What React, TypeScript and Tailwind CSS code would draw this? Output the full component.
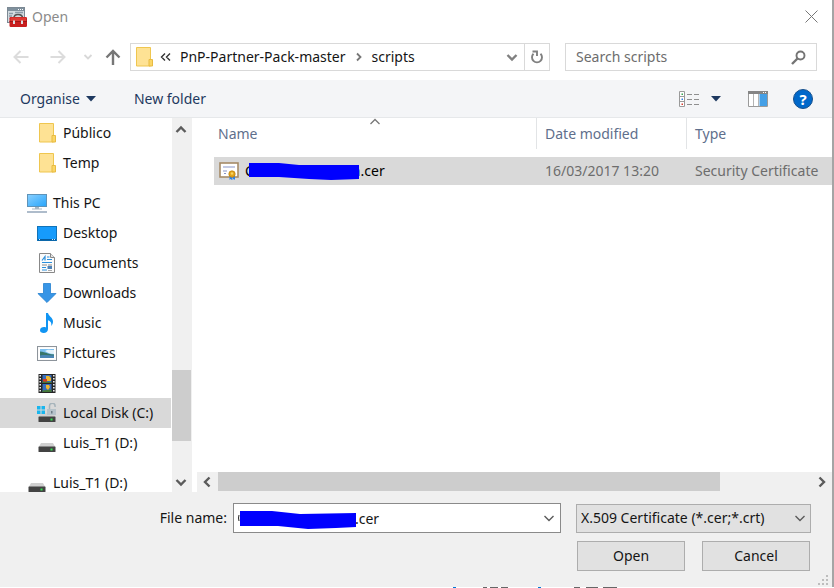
import type { ReactNode } from "react";

const FolderIcon = () => (
  <svg width="20" height="20" viewBox="0 0 20 20" className="block">
    <path d="M2.5 .5h14v18.5h-14z" fill="#fee294" stroke="#efc64f" />
    <path d="M15 12.5h3.5v6.5H15z" fill="#fbd666" stroke="#e8bb42" />
  </svg>
);

const PcIcon = () => (
  <svg width="20" height="20" viewBox="0 0 20 20" className="block">
    <defs>
      <linearGradient id="pc" x1="0" y1="0" x2="1" y2="1">
        <stop offset="0" stopColor="#8ad0ff" />
        <stop offset="1" stopColor="#27a5fb" />
      </linearGradient>
    </defs>
    <rect x=".5" y="1.5" width="19" height="12" fill="url(#pc)" stroke="#5f93b8" />
    <path d="M8 14h4v1.5h3v1H5v-1h3z" fill="#a9b8c4" />
    <path d="M0 18h20v2H0z" fill="#aebccb" />
  </svg>
);

const DesktopIcon = () => (
  <svg width="20" height="20" viewBox="0 0 20 20" className="block">
    <rect x=".5" y="3.5" width="19" height="14" fill="#169bfb" stroke="#1173b8" />
    <path d="M1 16h18v1.5H1z" fill="#075c9c" />
    <path d="M2 16h1v1H2zM15 16h1v1h-1zM17 16h1v1h-1z" fill="#cdeaff" />
  </svg>
);

const DocumentIcon = () => (
  <svg width="20" height="20" viewBox="0 0 20 20" className="block">
    <path d="M2.5.5h11l4 4v15h-15z" fill="#fbfbfb" stroke="#888" />
    <path d="M13.5.5v4h4" fill="#e4e4e4" stroke="#888" />
    <path d="M5 7.5 8 3.5v4M10 4h2.5M10 6.500h5M5 9.500h10M5 14.500h4M5 17h5" stroke="#2b8fdc" fill="none" strokeWidth="1.2" />
    <path d="M5 12h5M11 12h4" stroke="#888" />
    <path d="M10.500 13h4.500v3h-4.500z" fill="#4e83b8" />
    <path d="M11 17.500h4" stroke="#aaa" />
  </svg>
);

const DownloadIcon = () => (
  <svg width="20" height="20" viewBox="0 0 20 20" className="block">
    <path d="M6.5.5h7v10h5.500L10 19.500.900 10.500h5.600z" fill="#3795e6" stroke="#2580cf" strokeWidth=".8" />
  </svg>
);

const MusicIcon = () => (
  <svg width="20" height="20" viewBox="0 0 20 20" className="block">
    <path d="M9 0h2c.5 3 5 4.500 5 8.500 0 2-.6 3.200-1.800 4.500.8-3-.7-5-3.200-5.800V16c0 2.500-2 4-4.300 4C4.500 20 3 19 3 17.200 3 15 5 14 7 14c.8 0 1.400.1 2 .4z" fill="#1195f3" />
  </svg>
);

const PictureIcon = () => (
  <svg width="20" height="20" viewBox="0 0 20 20" className="block">
    <rect x=".5" y="3.5" width="19" height="14" fill="#fafafa" stroke="#8d949b" />
    <path d="M2 5h16v11H2z" fill="#fff" />
    <path d="M3 6h14v9H3z" fill="#7cc0f0" />
    <path d="M8 8c3-2 5-1 9-1v4c-4 0-6-1-9-3z" fill="#e4f3fc" />
    <path d="M3 8.500c3 0 5 1 8 2 2 .7 4 1 6 1V13H3z" fill="#38766a" />
    <path d="M3 12.500c5-1 9 0 14 0V15H3z" fill="#4a86b5" />
  </svg>
);

const VideoIcon = () => (
  <svg width="20" height="20" viewBox="0 0 20 20" className="block">
    <path d="M1.500 1h17v19h-17z" fill="#252525" />
    <path d="M3.200 2v17M16.800 2v17" stroke="#eee" strokeWidth="1.6" strokeDasharray="1.5 1.5" />
    <path d="M5.500 2h9v8h-9zM5.500 11h9v8h-9z" fill="#386fbd" />
    <path d="M9 3h3l2 2v3H9z" fill="#eeb830" />
    <path d="M6 6h4v3H6z" fill="#cf3c28" />
    <path d="M5.500 10V8.500l9 .5v1zM5.500 19v-1.500l9-1V19z" fill="#447838" />
    <path d="M9 12h3l1 2-2 3-2-2z" fill="#f0b72d" />
  </svg>
);

const DriveShape = () => (
  <>
    <path d="M4 10h12l2.500 4.500h-17z" fill="#d0d0d0" />
    <rect x="1.5" y="13.5" width="17" height="5.5" rx=".6" fill="#434343" />
    <path d="M13.500 15.500h2v2h-2z" fill="#37e052" />
  </>
);

const DriveIcon = () => (
  <svg width="20" height="20" viewBox="0 0 20 20" className="block">
    <DriveShape />
  </svg>
);

const SystemDriveIcon = () => (
  <svg width="20" height="20" viewBox="0 0 20 20" className="block">
    <DriveShape />
    <path d="M0 3h3.500v3.500H0zM4.500 3H8v3.500H4.500zM0 7.500h3.500V11H0zM4.500 7.500H8V11H4.500z" fill="#18b5ee" />
    <path d="M12.500 6V3a2.800 2.800 0 0 1 5.600 0v1" stroke="#a7b4bb" strokeWidth="1.5" fill="none" />
    <path d="M10 6h9v6h-9z" fill="#b6c3ca" />
    <path d="M14 8h1.500v2.500H14z" fill="#6d7d86" />
  </svg>
);

const CertificateIcon = () => (
  <svg width="20" height="20" viewBox="0 0 20 20" className="block">
    <rect x="1" y="2" width="18" height="14" fill="#fff" stroke="#a68b67" strokeWidth="1.6" />
    <path d="M4 6h12M4 10h4M5 12.500h2" stroke="#8795c8" />
    <path d="M10.500 14h2.500v5l-1.500-1-1 1zM13.500 14H16v5l-1.200-1-1.300 1z" fill="#2c82e8" />
    <circle cx="13" cy="13" r="3.2" fill="#e2a51c" stroke="#bb7c08" strokeWidth=".7" />
    <circle cx="13" cy="12.5" r="1.2" fill="#f7d363" />
  </svg>
);

const ToolboxIcon = () => (
  <svg width="20" height="20" viewBox="0 0 20 20" className="block">
    <rect x=".5" y=".5" width="17" height="15" fill="#d3dbe0" stroke="#7c8994" />
    <path d="M1 1h16v3H1z" fill="#7f909d" />
    <path d="M11 2.500h1M13 2.500h1M15 2.500h1" stroke="#fff" />
    <path d="M2 6.500h4M2 9h3M8 5.500h8" stroke="#8b9ba8" strokeWidth="1.5" />
    <path d="M7 11c0-3 1.500-3.500 4-3.500s4.500.5 4.500 3.500" stroke="#555" strokeWidth="1.6" fill="none" />
    <rect x="2.5" y="10" width="17.5" height="10" rx="1.2" fill="#c81e1e" />
    <path d="M3.500 10.500h15.500v3.500H3.500z" fill="#de3a34" />
    <path d="M2.500 14.500h17.500" stroke="#a01616" />
    <path d="M6 13.500h2V17H6zM14 13.500h2V17h-2z" fill="#d9dde0" />
  </svg>
);

type ChevronProps = { d: string; color?: string; weight?: number };

const Chevron = ({ d, color = "#5b5b5b", weight = 2.4 }: ChevronProps) => (
  <svg width="12" height="12" viewBox="0 0 12 12" fill="none" className="block shrink-0">
    <path d={d} stroke={color} strokeWidth={weight} />
  </svg>
);

const DOWN = "M1.500 4 6 8.500 10.500 4";
const UP = "M1.500 8 6 3.500 10.500 8";
const LEFT = "M8.500 1.500 4 6l4.500 4.500";
const RIGHT = "M3.500 1.500 8 6l-4.500 4.500";

const Caret = () => (
  <svg width="10" height="6" viewBox="0 0 10 6" className="block">
    <path d="M0 0h10L5 5.500z" fill="#1e3960" />
  </svg>
);

type NavItem = { label: string; icon: ReactNode; top?: boolean; selected?: boolean };

const groups: NavItem[][] = [
  [
    { label: "Público", icon: <FolderIcon /> },
    { label: "Temp", icon: <FolderIcon /> },
  ],
  [
    { label: "This PC", icon: <PcIcon />, top: true },
    { label: "Desktop", icon: <DesktopIcon /> },
    { label: "Documents", icon: <DocumentIcon /> },
    { label: "Downloads", icon: <DownloadIcon /> },
    { label: "Music", icon: <MusicIcon /> },
    { label: "Pictures", icon: <PictureIcon /> },
    { label: "Videos", icon: <VideoIcon /> },
    { label: "Local Disk (C:)", icon: <SystemDriveIcon />, selected: true },
    { label: "Luis_T1 (D:)", icon: <DriveIcon /> },
  ],
  [{ label: "Luis_T1 (D:)", icon: <DriveIcon />, top: true }],
];

function Navigation() {
  return (
    <nav className="flex w-[171px] shrink-0 flex-col gap-[10px] overflow-hidden">
      {groups.map((group, i) => (
        <ul key={i}>
          {group.map((item) => (
            <li key={item.label}>
              <button
                type="button"
                className={`flex h-[30px] w-full items-center gap-[6px] whitespace-nowrap text-left ${item.top ? "pl-[27px]" : "pl-[37px]"} ${item.selected ? "bg-[#d9d9d9]" : ""}`}
              >
                {item.icon}
                {item.label}
              </button>
            </li>
          ))}
        </ul>
      ))}
    </nav>
  );
}

function FileList() {
  return (
    <table className="ml-[19px] w-[calc(100%-19px)] table-fixed border-collapse whitespace-nowrap text-left">
      <thead className="text-[#5f6f8c]">
        <tr className="align-top">
          <th className="w-[323px] p-0 pb-2 font-normal">
            <div className="relative flex h-[31px] items-center border-r border-[#e2e4e6] pl-1">
              Name
              <span className="absolute left-1/2 top-[-2px] -translate-x-1/2">
                <Chevron d={UP} color="#777" weight={1.3} />
              </span>
            </div>
          </th>
          <th className="w-[150px] p-0 pb-2 font-normal">
            <div className="flex h-[31px] items-center border-r border-[#e2e4e6] pl-2">Date modified</div>
          </th>
          <th className="p-0 pb-2 font-normal">
            <div className="flex h-[31px] items-center pl-2">Type</div>
          </th>
        </tr>
      </thead>
      <tbody>
        <tr className="h-[28px] bg-[#d9d9d9] text-[#6d6d6d]">
          <td className="p-0 text-black">
            <div className="flex items-center pl-[5px]">
              <CertificateIcon />
              <span className="ml-[6px]">C</span>
              <svg width="110" height="20" viewBox="0 0 110 20" className="z-10 -ml-[5px] -mr-[7px] block">
                <path d="M0 2 30 2 50 4 110 4V18L82 19 60 18 30 16H0z" fill="#00f" />
              </svg>
              <span>n.cer</span>
            </div>
          </td>
          <td className="p-0 pl-2">16/03/2017 13:20</td>
          <td className="p-0 pl-2">Security Certificate</td>
        </tr>
      </tbody>
    </table>
  );
}

export default function App() {
  return (
    <div className="flex h-screen flex-col overflow-hidden bg-white font-['Noto_Sans','Open_Sans',sans-serif] text-[14px] leading-5 text-[#151515]">
      <div className="flex min-h-0 flex-1 flex-col border-r-2 border-[#a5a5a5]">
        <header className="flex h-[33px] shrink-0 items-center gap-[5px] pl-[7px] pr-[14px]">
          <ToolboxIcon />
          <h1 className="text-[#8b8b8b]">Open</h1>
          <button type="button" aria-label="Close" className="ml-auto">
            <svg width="13" height="13" viewBox="0 0 13 13" className="block">
              <path d="M.5.5l12 12M12.500.5l-12 12" stroke="#777" />
            </svg>
          </button>
        </header>

        <div className="flex h-[47px] shrink-0 items-center pb-[1px] pl-[13px] pr-[15px] pt-[2px]">
          <div className="flex w-[117px] shrink-0 items-center">
            <button type="button" aria-label="Back" className="mr-[21px]">
              <svg width="16" height="14" viewBox="0 0 16 14" fill="none" stroke="#dcdcdc" strokeWidth="2" className="block">
                <path d="M15.500 7H1.500M7.500 1l-6 6 6 6" />
              </svg>
            </button>
            <button type="button" aria-label="Forward" className="mr-[17px]">
              <svg width="16" height="14" viewBox="0 0 16 14" fill="none" stroke="#dcdcdc" strokeWidth="2" className="block">
                <path d="M.5 7h14M8.500 1l6 6-6 6" />
              </svg>
            </button>
            <button type="button" aria-label="Recent locations" className="mr-[12px]">
              <svg width="10" height="12" viewBox="0 0 10 12" fill="none" className="block">
                <path d="M1.500 4 5 7.500 8.500 4" stroke="#d8d8d8" strokeWidth="1.8" />
              </svg>
            </button>
            <button type="button" aria-label="Up">
              <svg width="16" height="16" viewBox="0 0 16 16" fill="none" stroke="#777" strokeWidth="2.4" className="block">
                <path d="M8 16V2M1.500 8.500 8 2l6.500 6.500" />
              </svg>
            </button>
          </div>
          <div className="flex h-[28px] min-w-0 flex-1 items-center border border-[#d9d9d9]">
            <span className="ml-[3px]">
              <FolderIcon />
            </span>
            <svg width="11" height="10" viewBox="0 0 11 10" fill="none" stroke="#333" strokeWidth="1.4" className="ml-[6px] block">
              <path d="M5 1.500 1.500 5 5 8.500M10 1.500 6.500 5l3.500 3.500" />
            </svg>
            <button type="button" className="ml-[9px] whitespace-nowrap">PnP-Partner-Pack-master</button>
            <span className="mx-[7px]">
              <svg width="12" height="12" viewBox="0 0 12 12" fill="none" className="block">
                <path d="M4 2.500 7.500 6 4 9.500" stroke="#777" strokeWidth="1.8" />
              </svg>
            </span>
            <button type="button">scripts</button>
            <button type="button" aria-label="Previous locations" className="ml-auto mr-[6px]">
              <Chevron d={DOWN} color="#808080" />
            </button>
            <button type="button" aria-label="Refresh" className="flex h-full w-[25px] items-center justify-center border-l border-[#d9d9d9]">
              <svg width="14" height="14" viewBox="0 0 14 14" fill="none" className="block">
                <path d="M10.500 3.800A5 5 0 1 1 3.500 3.800" stroke="#808080" strokeWidth="1.9" />
                <path d="M2.500 1.500H7V6" stroke="#808080" strokeWidth="1.9" />
              </svg>
            </button>
          </div>
          <label className="ml-[15px] flex h-[28px] w-[252px] shrink-0 items-center border border-[#d9d9d9] px-[10px]">
            <input type="search" aria-label="Search scripts" placeholder="Search scripts" className="min-w-0 flex-1 bg-transparent outline-none placeholder:text-[#6d6d6d]" />
            <svg width="15" height="15" viewBox="0 0 15 15" fill="none" stroke="#747474" className="block">
              <circle cx="9.5" cy="5.5" r="4" strokeWidth="1.9" />
              <path d="M6.500 8.500 1 14" strokeWidth="2.4" />
            </svg>
          </label>
        </div>

        <div className="flex h-[38px] shrink-0 items-center border-b border-[#e6e8ea] bg-[#f4f5f7] pl-5 pr-[19px] text-[#1e3960]">
          <button type="button" className="flex items-center gap-[6px]">
            Organise
            <Caret />
          </button>
          <button type="button" className="ml-[38px]">New folder</button>
          <button type="button" aria-label="Change your view" className="ml-auto flex items-center gap-[12px]">
            <svg width="20" height="16" viewBox="0 0 20 16" className="block">
              <path d="M.5.5h5v15h-5zM.5 5.500h5M.5 10.500h5" fill="#fff" stroke="#9a9a9a" />
              <path d="M2.500 2.500h1.500V4H2.500z" fill="#35a853" />
              <path d="M2.500 7.500h1.500V9H2.500z" fill="#3582e8" />
              <path d="M2.500 12.500h1.500V14H2.500z" fill="#d93c32" />
              <path d="M8 3.500h5M15 3.500h5M8 8.500h5M15 8.500h5M8 13.500h5M15 13.500h5" stroke="#8f8f8f" />
            </svg>
            <Caret />
          </button>
          <button type="button" aria-label="Show the preview pane" className="ml-[27px]">
            <svg width="20" height="16" viewBox="0 0 20 16" className="block">
              <path d="M.5 1.500h19v14H.5z" fill="#fff" stroke="#9a9a9a" />
              <path d="M0 0h20v3H0z" fill="#858585" />
              <path d="M5.500 3v12M10.500 3v12" stroke="#b5b5b5" />
              <path d="M11.500 3h7.500v12h-7.500z" fill="#449fe6" />
              <path d="M15 1h1v1h-1zM17 1h1v1h-1z" fill="#fff" />
            </svg>
          </button>
          <button type="button" aria-label="Get help" className="ml-[25px] flex h-5 w-5 items-center justify-center rounded-full border border-[#17508c] bg-[#0068ca] text-[15px] font-bold text-white">
            ?
          </button>
        </div>

        <div className="flex min-h-0 flex-1">
          <Navigation />
          <div className="ml-[1px] flex w-[20px] shrink-0 flex-col items-start bg-[#f0f0f0] pb-[4px] pt-[6px]">
            <span className="ml-[3px]">
              <Chevron d={UP} />
            </span>
            <div className="mb-[35px] mt-auto h-[71px] w-[19px] bg-[#cdcdcd]" />
            <span className="ml-[3px]">
              <Chevron d={DOWN} />
            </span>
          </div>
          <main className="ml-[3px] flex min-w-0 flex-1 flex-col">
            <div className="min-h-0 flex-1 overflow-hidden">
              <FileList />
            </div>
            <div className="ml-[2px] flex h-[20px] shrink-0 items-center bg-[#f0f0f0] px-[4px]">
              <Chevron d={LEFT} />
              <div className="ml-[5px] mr-auto h-[19px] w-[80%] self-start bg-[#cdcdcd]" />
              <Chevron d={RIGHT} />
            </div>
          </main>
        </div>

        <footer className="flex shrink-0 flex-col gap-[8px] bg-[#f0f0f0] pb-[16px] pt-[11px]">
          <div className="flex items-center pr-[21px]">
            <label htmlFor="file-name" className="w-[233px] pr-[6px] text-right">File name:</label>
            <div className="relative flex h-[30px] min-w-0 flex-1 items-center border border-[#8a8a8a] bg-white">
              <input id="file-name" type="text" defaultValue=".cer" className="h-full min-w-0 flex-1 bg-transparent pl-[121px] outline-none" />
              <svg width="118" height="20" viewBox="0 0 118 20" className="absolute left-[4px] top-[5px]">
                <path d="M1 6Q0 9 1 12" stroke="#222" fill="none" />
                <path d="M2 2H34L62 5 118 4V18L98 19 70 20 40 17 2 17z" fill="#00f" />
              </svg>
              <button type="button" aria-label="Recent file names" className="mr-[5px]">
                <Chevron d={DOWN} weight={1.4} />
              </button>
            </div>
            <div className="relative ml-[15px] w-[235px] shrink-0">
              <select aria-label="File type" className="block h-[29px] w-full appearance-none border border-[#adadad] bg-[#e1e1e1] pl-[4px] pr-6 outline-none">
                <option>X.509 Certificate (*.cer;*.crt)</option>
              </select>
              <span className="pointer-events-none absolute right-[5px] top-[8px]">
                <Chevron d={DOWN} weight={1.4} />
              </span>
            </div>
          </div>
          <div className="relative flex justify-end gap-[17px] pr-[22px]">
            <button type="button" className="h-[30px] w-[108px] border border-[#adadad] bg-[#e1e1e1]">Open</button>
            <button type="button" className="h-[30px] w-[108px] border border-[#adadad] bg-[#e1e1e1]">Cancel</button>
            <svg width="10" height="10" viewBox="0 0 10 10" className="absolute -bottom-[14px] right-[4px]" fill="#bdbdbd">
              <path d="M8 0h2v2H8zM4 4h2v2H4zM8 4h2v2H8zM0 8h2v2H0zM4 8h2v2H4zM8 8h2v2H8z" />
            </svg>
          </div>
        </footer>
      </div>
      <div className="flex h-px shrink-0 justify-end bg-white pr-[162px]">
        <svg width="219" height="1" viewBox="0 0 219 1" className="block">
          <path d="M0 0h3v1H0zM85 0h3v1h-3z" fill="#0078d7" />
          <path d="M30 0h4v1h-4zM37 0h8v1h-8zM48 0h7v1h-7zM121 0h6v1h-6zM133 0h12v1h-12zM150 0h14v1h-14z" fill="#666" />
        </svg>
      </div>
    </div>
  );
}
